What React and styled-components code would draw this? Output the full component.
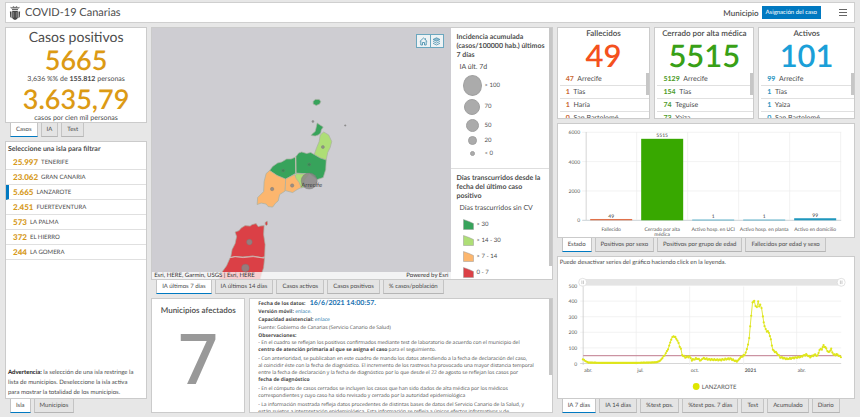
import React from 'react'
import styled, { createGlobalStyle } from 'styled-components'

const GlobalStyle = createGlobalStyle`
  * {
    box-sizing: border-box;
    margin: 0;
    padding: 0;
  }
  body {
    background: #e7e7e7;
    color: #4c4c4c;
    font-family: Lato, "Liberation Sans", sans-serif;
    font-size: 7px;
    text-rendering: geometricPrecision;
  }
  button {
    font-family: inherit;
    color: inherit;
    text-rendering: inherit;
  }
  svg text {
    font-family: Lato, "Liberation Sans", sans-serif;
  }
`
const Page = styled.div`
  display: flex;
  flex-direction: column;
  gap: 4px;
  height: 100vh;
  padding: 2px 5px 4px;
`
const Header = styled.header`
  display: flex;
  align-items: center;
  flex: none;
  height: 21px;
  padding: 0 6px 0 3px;
  background: #fff;
  border: 1px solid #cfcfcf;
  svg {
    display: block;
  }
  h1 {
    flex: 1;
    margin-left: 4px;
    font-size: 11px;
    font-weight: 400;
  }
`
const HeaderLabel = styled.span`
  margin-right: 3px;
  font-size: 8px;
  font-weight: 600;
`
const CaseButton = styled.button`
  height: 13px;
  padding: 0 4px;
  border: none;
  background: #0079c1;
  color: #fff;
  font-size: 6px;
`
const MenuButton = styled.button`
  margin-left: 17px;
  border: none;
  background: none;
`
const Columns = styled.main`
  display: grid;
  grid-template-columns: 142fr 401fr 298fr;
  column-gap: 4px;
  flex: 1;
  min-height: 0;
`
const Column = styled.div`
  display: flex;
  flex-direction: column;
  gap: 4px;
  min-width: 0;
  min-height: 0;
`
const Group = styled.div`
  display: flex;
  flex-direction: column;
  flex: ${(p) => p.$grow} 1 0;
  min-height: 0;
`
const Row = styled.div`
  display: flex;
  gap: 4px;
  flex: ${(p) => p.$grow} 1 0;
  min-height: 0;
`
const Card = styled.section`
  position: relative;
  display: flex;
  flex-direction: column;
  flex: ${(p) => p.$grow || 1} 1 0;
  min-width: 0;
  min-height: 0;
  overflow: hidden;
  background: #fff;
  border: 1px solid #cbcbcb;
`
const TabBar = styled.nav`
  display: flex;
  gap: 3px;
  flex: none;
  height: 14px;
  padding-left: 5px;
`
const Tab = styled.button`
  height: 14px;
  padding: 0 5px;
  border: 1px solid #c4c4c4;
  border-top: none;
  border-bottom: ${(p) => (p.$active ? '1px solid #0079c1' : '1px solid #b5b5b5')};
  background: ${(p) => (p.$active ? '#fff' : '#e4e4e4')};
  font-size: 6px;
  white-space: nowrap;
`
const Indicator = styled(Card)`
  align-items: center;
  h2 {
    margin-top: 1px;
    font-size: 14px;
    line-height: 16px;
    font-weight: 400;
  }
  p {
    font-size: 7px;
    line-height: 9px;
  }
`
const BigNumber = styled.strong`
  font-size: ${(p) => p.$size}px;
  line-height: 30px;
  font-weight: 600;
  color: ${(p) => p.$color};
`
const ListTitle = styled.h3`
  padding: 2px 2px 0;
  font-size: 7px;
  line-height: 11px;
`
const IslandList = styled.ul`
  flex: 1;
  list-style: none;
`
const Island = styled.li`
  button {
    display: flex;
    align-items: center;
    gap: 3px;
    width: 100%;
    height: 15px;
    padding-left: ${(p) => (p.$active ? '4px' : '7px')};
    border: none;
    border-left: ${(p) => (p.$active ? '3px solid #0079c1' : 'none')};
    border-bottom: 1px solid #e0e0e0;
    background: none;
    font-size: 6px;
  }
  strong {
    font-size: 8px;
    font-weight: 900;
    color: #d69a1c;
  }
`
const Warning = styled.p`
  padding: 0 6px 0 2px;
  font-size: 6px;
  line-height: 10px;
  b {
    color: #222;
  }
`
const MapCard = styled(Card)`
  flex-direction: row;
`
const MapArea = styled.div`
  position: relative;
  flex: 298 1 0;
  min-width: 0;
  background: #cecdd2;
  > svg {
    display: block;
    width: 100%;
    height: 100%;
  }
`
const MapTools = styled.div`
  position: absolute;
  top: 6px;
  right: 7px;
  display: flex;
  border: 1px solid #6ba7bf;
  button {
    display: flex;
    align-items: center;
    justify-content: center;
    width: 13px;
    height: 12px;
    border: none;
    background: #eef3f5;
  }
  button + button {
    border-left: 1px solid #6ba7bf;
  }
`
const Attribution = styled.div`
  position: absolute;
  left: 0;
  right: 0;
  bottom: 0;
  display: flex;
  justify-content: space-between;
  padding: 0 2px;
  background: rgba(255, 255, 255, 0.75);
  font-size: 6px;
  line-height: 7px;
  color: #333;
`
const Legend = styled.aside`
  flex: 101 1 0;
  min-width: 0;
  overflow: hidden;
  section {
    padding: 5px 6px 0;
  }
  section + section {
    margin-top: 9px;
    border-top: 1px solid #dedede;
  }
  h3 {
    font-size: 7px;
    line-height: 9px;
  }
  p {
    margin: 3px;
    font-size: 7px;
    line-height: 9px;
    white-space: nowrap;
  }
`
const LegendItem = styled.div`
  display: flex;
  align-items: center;
  gap: 3px;
  height: ${(p) => p.$height}px;
  padding-left: 6px;
  font-size: 6px;
`
const Bubble = styled.span`
  display: flex;
  justify-content: center;
  width: 19px;
  &::before {
    content: '';
    width: ${(p) => p.$size}px;
    height: ${(p) => p.$size}px;
    border-radius: 50%;
    background: #ababab;
    border: 1px solid #a0a0a0;
  }
`
const ScrollThumb = styled.span`
  position: absolute;
  top: ${(p) => p.$top || '0'};
  right: 0;
  width: 3px;
  height: ${(p) => p.$height};
  background: #c6c6c6;
`
const Affected = styled(Card)`
  align-items: center;
  h2 {
    margin-top: 6px;
    font-size: 8px;
    line-height: 10px;
    font-weight: 600;
  }
  strong {
    font-family: "Open Sans", "Noto Sans", sans-serif;
    font-size: 70px;
    font-weight: 600;
    line-height: 84px;
    color: #999;
  }
`
const Notes = styled.div`
  padding: 1px 8px 0;
  font-family: "Open Sans", "Noto Sans", sans-serif;
  font-size: 5px;
  line-height: 8px;
  white-space: nowrap;
  p {
    margin-bottom: 2px;
    line-height: 7px;
  }
  a {
    color: #1673a8;
    text-decoration: none;
  }
  time {
    margin-left: 3px;
    font-family: Lato, "Liberation Sans", sans-serif;
    font-size: 7px;
    font-weight: 700;
    line-height: 7px;
    color: #1670b0;
  }
`
const Status = styled(Card)`
  h2 {
    font-size: 8px;
    line-height: 10px;
    font-weight: 600;
    text-align: center;
    white-space: nowrap;
  }
  ${BigNumber} {
    line-height: 35px;
    text-align: center;
  }
  ul {
    list-style: none;
    margin-left: 2px;
  }
  li {
    height: 13px;
    padding-left: 6px;
    border-bottom: 1px solid #e0e0e0;
    font-size: 7px;
    line-height: 12px;
  }
  li b {
    margin-right: 2px;
    color: ${(p) => p.$color};
  }
`
const ChartBox = styled.div`
  flex: 1;
  min-height: 0;
  svg {
    display: block;
    width: 100%;
    height: 100%;
  }
`
const ChartNote = styled.p`
  padding: 1px 2px 0;
  font-size: 6px;
  line-height: 10px;
`

const islands = [
  ['25.997', 'TENERIFE'],
  ['23.062', 'GRAN CANARIA'],
  ['5.665', 'LANZAROTE'],
  ['2.451', 'FUERTEVENTURA'],
  ['573', 'LA PALMA'],
  ['372', 'EL HIERRO'],
  ['244', 'LA GOMERA'],
]

const statuses = [
  {
    title: 'Fallecidos',
    total: 49,
    color: '#f4511e',
    rowColor: '#c9662f',
    grow: 93,
    rows: [[47, 'Arrecife'], [1, 'Tías'], [1, 'Haría'], [0, 'San Bartolomé']],
  },
  {
    title: 'Cerrado por alta médica',
    total: 5515,
    color: '#38a016',
    rowColor: '#4a9a25',
    grow: 99,
    rows: [[5129, 'Arrecife'], [154, 'Tías'], [74, 'Teguise'], [73, 'Yaiza']],
  },
  {
    title: 'Activos',
    total: 101,
    color: '#1b9fd8',
    rowColor: '#2a95bf',
    grow: 96,
    rows: [[99, 'Arrecife'], [1, 'Tías'], [1, 'Yaiza'], [0, 'San Bartolomé']],
  },
]

const bars = [
  { label: ['Fallecido'], value: 49, color: '#e0714a' },
  { label: ['Cerrado por alta', 'médica'], value: 5515, color: '#38a800' },
  { label: ['Activo hosp. en UCI'], value: 1, color: '#1f97bd' },
  { label: ['Activo hosp. en planta'], value: 1, color: '#1f97bd' },
  { label: ['Activo en domicilio'], value: 99, color: '#1f97bd' },
]

// x: position along the axis (0-775), y: incidence
const series = [
  [0, 26], [7, 16], [17, 6], [52, 4], [152, 4], [202, 6], [222, 8], [232, 18],
  [242, 44], [252, 76], [259, 112], [265, 156], [272, 176], [280, 162],
  [287, 130], [294, 92], [298, 54], [307, 40], [320, 44], [327, 22], [342, 32],
  [354, 20], [360, 34], [377, 26], [412, 23], [442, 31], [462, 12], [474, 40],
  [485, 55], [492, 88], [499, 162], [502, 236], [505, 310], [509, 388],
  [514, 404], [518, 364], [522, 364], [526, 400], [529, 362], [532, 382],
  [536, 354], [540, 300], [545, 236], [552, 206], [558, 200], [564, 152],
  [570, 86], [582, 66], [592, 40], [612, 29], [652, 42], [670, 57], [682, 42],
  [697, 57], [704, 48], [710, 88], [717, 92], [722, 116], [730, 96], [737, 70],
  [745, 92], [752, 56], [764, 57], [774, 40],
]

function Tabs({ items }) {
  return (
    <TabBar>
      {items.map((item, i) => (
        <Tab key={item} $active={i === 0}>{item}</Tab>
      ))}
    </TabBar>
  )
}

function Crest() {
  return (
    <svg width="12" height="16" viewBox="0 0 12 16" fill="#444">
      <path d="M2 3.6 1.2 1.8l2 .7L4.3.9 6 2.2 7.7.9l1.1 1.6 2-.7L10 3.6z" opacity=".75" />
      <path d="M3 4.2h6v1H3z" />
      <path d="M3.2 6h5.6v6.2c0 1.4-1.2 2.2-2.8 2.8-1.6-.6-2.8-1.4-2.8-2.8z" />
      <path d="M.9 6.4h1.6v6.8L1.2 12zM11.1 6.4H9.5v6.8l1.3-1.2z" />
      <path d="M4.7 7v5.6M7.3 7v5.6" stroke="#aaa" strokeWidth=".6" />
    </svg>
  )
}

function IslandMap() {
  const green = '#37a35b'
  const lime = '#aede76'
  const orange = '#fcb66e'
  const red = '#db4046'
  return (
    <svg viewBox="152 28 298 252" preserveAspectRatio="xMidYMid slice">
      <g stroke="#a9b0a2" strokeWidth=".7" strokeLinejoin="round">
        <path fill={green} d="M313 102l2-2 4 0 1.5 2-1 2.5-3.5 1.5-3-1.5z" />
        <path fill={green} d="M317 123.5l2 1.5 4 2.5-2 3-.5 3-2.5 2-3 1-4-.5 1-1.5 3-2.5 1-4z" />
        <path fill={lime} d="M320 135.5l3.5-3 5 3 3 6.5-1.5 6-2.5 5-1.5 7.5-6-2-6-3.5 2.5-7 2.5-6z" />
        <path fill={green} d="M295.5 157.5l3-4 3-1 5 1.5 4-1 3.5 2 6 3.5 6 2-.5 9.5-2.5 8-6 2-8-6-7 0-6.5-.5z" />
        <path fill={green} d="M269.5 171l3-4 5-3.5 4-1 5-3 4.5 0 4.5-2 .5 16-11 6.5-8.5-4z" />
        <path fill={lime} d="M296 174l6 .5 7 0-5 6 0 7-3 1-3-6-3.5-4z" />
        <path fill={orange} d="M269.5 171l-3.5 3-2 8-.5 10-6 6-.5 7 4-1.5 5 1 2 2.5 4.5 .5 3-4 2.5-2 1.5-6.5 5.5-3.5.5-12-8.5-3.5z" />
        <path fill={orange} d="M285.5 179.5l9-4.5 1.5 4 3 4 2 5-4 2-4.5 3-7.5-2z" />
        <path fill={red} d="M235 232.5l4-1.5 2-2.5 4-2.5 5 .5 2-1.5 4-1 2 3 2-.5 4-.5-.5 9 1.5 10-.5 12-3 1-9-1.5-10 1-8-.5-4 1 1.5-8 3-6 1.5-7z" />
        <path fill={red} d="M230 258l5-1 8 .5 10-1 9 1.5 2.5 0-1 10-2 6-2 8h-42l4-9 5-7z" />
        <path fill={red} d="M265 223l2-1.5.5 3-1 1.5-1.5-1z" />
      </g>
      <path d="M230 258l5-1 8 1 10-1 11 1.5M295.5 157.5v16" fill="none" stroke="#e8c5c5" strokeWidth=".7" />
      <g fill="#8b8787" fillOpacity=".85" stroke="#777" strokeWidth=".4">
        <circle cx="312.7" cy="122" r="1" />
        <circle cx="345" cy="126" r=".7" />
        <circle cx="322.7" cy="147.5" r="1.5" />
        <circle cx="283" cy="171" r="1.5" fill="#2f8b4d" />
        <circle cx="309" cy="165" r="1.5" fill="#2f8b4d" />
        <circle cx="309" cy="181.5" r="8" />
        <circle cx="272" cy="189.5" r="1.7" />
        <circle cx="292" cy="186" r="1.7" />
        <circle cx="249.3" cy="242.5" r="2.8" />
        <circle cx="245.3" cy="268.3" r="3.8" />
      </g>
      <text x="301" y="187" fontSize="6" fill="#444">Arrecife</text>
    </svg>
  )
}

function LegendShape({ color }) {
  return (
    <svg width="11" height="11" viewBox="0 0 11 11">
      <path d="M.5.5 6 2.5 10.5 4.5V10.5H.5z" fill={color} stroke="#999" strokeWidth=".5" />
    </svg>
  )
}

function BarChart() {
  const step = 51
  const y = (v) => 221.3 - (v / 6000) * 88
  return (
    <svg viewBox="558 125 296 113" fontSize="5" fill="#555">
      {[0, 2000, 4000, 6000].map((v) => (
        <g key={v}>
          <path d={`M582 ${y(v)}H841`} stroke={v ? '#ededed' : '#b5bfc4'} strokeWidth=".7" />
          <text x="580" y={y(v) + 2} textAnchor="end">{v}</text>
        </g>
      ))}
      <path d="M586 133V221" stroke="#c4c4c4" strokeWidth=".7" />
      {bars.map((bar, i) => {
        const center = 611 + i * step
        return (
          <g key={bar.label[0]} textAnchor="middle">
            <path d={`M${center + 25.5} 133V221`} stroke="#ededed" strokeWidth=".7" />
            <rect x={center - 21} y={y(bar.value) - 0.6} width="42" height={221.9 - y(bar.value)} fill={bar.color} />
            <text x={center} y={y(bar.value) - 2} fill="#333">{bar.value}</text>
            {bar.label.map((line, n) => (
              <text key={line} x={center} y={232 + n * 5}>{line}</text>
            ))}
          </g>
        )
      })}
    </svg>
  )
}

function LineChart() {
  const y = (v) => 363.5 - v * 0.156
  const x = (v) => 582.7 + v / 3
  // one marker every three units, interpolated between the known points
  const points = []
  for (let i = 0; i < series.length - 1; i++) {
    const [x1, y1] = series[i]
    const [x2, y2] = series[i + 1]
    const count = Math.max(1, Math.round((x2 - x1) / 3))
    for (let n = 0; n < count; n++) {
      const jitter = Math.sin(points.length * 2.3) * (y1 > 20 ? 4 : 0.5)
      points.push([x(x1 + ((x2 - x1) * n) / count), y(y1 + ((y2 - y1) * n) / count + jitter)])
    }
  }
  points.push([x(774), y(40)])
  const ticks = [['abr.', 583], ['jul.', 636], ['oct.', 689.5], ['2021', 743.5], ['abr.', 796.5]]
  return (
    <svg viewBox="558 268 296 130" fontSize="5" fill="#555">
      <rect x="582" y="279" width="259" height="6.5" fill="#e4e4e4" />
      {[582.5, 841].map((cx) => (
        <g key={cx}>
          <circle cx={cx} cy="282.3" r="4" fill="#fff" stroke="#d0d0d0" strokeWidth=".6" />
          <path d={`M${cx - 0.8} 280.5v3.6M${cx + 0.8} 280.5v3.6`} stroke="#999" strokeWidth=".5" />
        </g>
      ))}
      {[0, 100, 200, 300, 400, 500].map((v) => (
        <g key={v}>
          <path d={`M580 ${y(v)}H841`} stroke={v ? '#ededed' : '#c4c4c4'} strokeWidth=".7" />
          <text x="577" y={y(v) + 2} textAnchor="end">{v}</text>
        </g>
      ))}
      {ticks.map(([label, tx], i) => (
        <g key={tx}>
          <path d={`M${tx} 286.5V365`} stroke={i ? '#ededed' : '#c4c4c4'} strokeWidth=".7" />
          <text x={tx + 1} y="372" fontWeight={label === '2021' ? 700 : 400}>{label}</text>
        </g>
      ))}
      <path d={`M583 ${y(50)}H841`} stroke="#bf7b8d" strokeWidth="1" />
      <path d={'M' + points.map((p) => p.join(' ')).join('L')} fill="none" stroke="#e2e83c" strokeWidth="1" />
      {points.map(([px, py], i) => (
        <circle key={i} cx={px} cy={py} r="1.1" fill="#dfe61a" />
      ))}
      <circle cx="696" cy="386.5" r="3.4" fill="#dfe600" />
      <text x="701.5" y="388.8" fontSize="6">LANZAROTE</text>
    </svg>
  )
}

export default function App() {
  return (
    <>
      <GlobalStyle />
      <Page>
        <Header>
          <Crest />
          <h1>COVID-19 Canarias</h1>
          <HeaderLabel>Municipio</HeaderLabel>
          <CaseButton>Asignación del caso</CaseButton>
          <MenuButton aria-label="Menú">
            <svg width="10" height="9" viewBox="0 0 10 9" stroke="#666" strokeWidth="1">
              <path d="M1 1.5h8M1 4.5h8M1 7.5h8" />
            </svg>
          </MenuButton>
        </Header>
        <Columns>
          <Column>
            <Group $grow={110}>
              <Indicator>
                <h2>Casos positivos</h2>
                <BigNumber $size={27} $color="#dc9a14">5665</BigNumber>
                <p>3,636 %% de <b>155.812</b> personas</p>
                <BigNumber $size={27} $color="#dc9a14">3.635,79</BigNumber>
                <p>casos por cien mil personas</p>
              </Indicator>
              <Tabs items={['Casos', 'IA', 'Test']} />
            </Group>
            <Group $grow={272}>
              <Card>
                <ListTitle>Seleccione una isla para filtrar</ListTitle>
                <IslandList>
                  {islands.map(([count, name]) => (
                    <Island key={name} $active={name === 'LANZAROTE'}>
                      <button><strong>{count}</strong> {name}</button>
                    </Island>
                  ))}
                </IslandList>
                <Warning>
                  <b>Advertencia:</b> la selección de una isla restringe la lista de
                  municipios. Deseleccione la isla activa para mostrar la totalidad
                  de los municipios.
                </Warning>
              </Card>
              <Tabs items={['Isla', 'Municipios']} />
            </Group>
          </Column>

          <Column>
            <Group $grow={267}>
              <MapCard>
                <MapArea>
                  <IslandMap />
                  <MapTools>
                    <button aria-label="Inicio">
                      <svg width="9" height="9" viewBox="0 0 9 9" fill="none" stroke="#4d93b0" strokeWidth=".9">
                        <path d="M.8 4.5 4.5 1l3.7 3.5M1.8 4v4h1.7V5.5h2V8h1.7V4M6.5 1.3v1.5" />
                      </svg>
                    </button>
                    <button aria-label="Capas">
                      <svg width="9" height="9" viewBox="0 0 9 9" fill="none" stroke="#4d93b0" strokeWidth=".8">
                        <path d="M4.5.8 8 2.5 4.5 4.2 1 2.5z" fill="#8fbccf" />
                        <path d="M1 4.4 4.5 6.1 8 4.4M1 6.3 4.5 8 8 6.3" />
                      </svg>
                    </button>
                  </MapTools>
                  <Attribution>
                    <span>Esri, HERE, Garmin, USGS | Esri, HERE</span>
                    <span>Powered by Esri</span>
                  </Attribution>
                </MapArea>
                <Legend>
                  <section>
                    <h3>Incidencia acumulada (casos/100000 hab.) últimos 7 días</h3>
                    <p>IA últ. 7d</p>
                    <LegendItem $height={21}><Bubble $size={19} />&gt; 100</LegendItem>
                    <LegendItem $height={21}><Bubble $size={14} />70</LegendItem>
                    <LegendItem $height={17}><Bubble $size={11} />50</LegendItem>
                    <LegendItem $height={13}><Bubble $size={7} />20</LegendItem>
                    <LegendItem $height={12}><Bubble $size={3} />&lt; 0</LegendItem>
                  </section>
                  <section>
                    <h3>Días transcurridos desde la fecha del último caso positivo</h3>
                    <p>Días trascurridos sin CV</p>
                    <LegendItem $height={16}><LegendShape color="#37a35b" />&gt; 30</LegendItem>
                    <LegendItem $height={16}><LegendShape color="#aede76" />&gt; 14 - 30</LegendItem>
                    <LegendItem $height={16}><LegendShape color="#fcb66e" />&gt; 7 - 14</LegendItem>
                    <LegendItem $height={16}><LegendShape color="#db4046" />0 - 7</LegendItem>
                  </section>
                </Legend>
                <ScrollThumb $height="95%" />
              </MapCard>
              <Tabs items={['IA últimos 7 días', 'IA últimos 14 días', 'Casos activos', 'Casos positivos', '% casos/población']} />
            </Group>
            <Row $grow={115}>
              <Affected $grow={93}>
                <h2>Municipios afectados</h2>
                <strong>7</strong>
              </Affected>
              <Card $grow={304}>
                <Notes>
                  <b>Fecha de los datos:</b> <time>16/6/2021 14:00:57.</time><br />
                  <b>Versión móvil:</b> <a href="#movil">enlace.</a><br />
                  <b>Capacidad asistencial:</b> <a href="#capacidad">enlace</a><br />
                  Fuente: Gobierno de Canarias (Servicio Canario de Salud)<br />
                  <b>Observaciones:</b>
                  <p>
                    - En el cuadro se reflejan los positivos confirmados mediante test de laboratorio de acuerdo con el municipio del<br />
                    <b>centro de atención primaria al que se asigna el caso</b> para el seguimiento.
                  </p>
                  <p>
                    - Con anterioridad, se publicaban en este cuadro de mando los datos atendiendo a la fecha de declaración del caso,<br />
                    al coincidir éste con la fecha de diagnóstico. El incremento de los rastreos ha provocado una mayor distancia temporal<br />
                    entre la fecha de declaración y la fecha de diagnóstico por lo que desde el 22 de agosto se reflejan los casos por<br />
                    <b>fecha de diagnóstico</b>
                  </p>
                  <p>
                    - En el cómputo de casos cerrados se incluyen los casos que han sido dados de alta médica por los médicos<br />
                    correspondientes y cuyo caso ha sido revisado y cerrado por la autoridad epidemiológica
                  </p>
                  <p>
                    - La información mostrada refleja datos procedentes de distintas bases de datos del Servicio Canario de la Salud, y<br />
                    están sujetos a interpretación epidemiológica. Esta información se refleja a únicos efectos informativos y de
                  </p>
                </Notes>
                <ScrollThumb $height="67%" />
              </Card>
            </Row>
          </Column>

          <Column>
            <Row $grow={92}>
              {statuses.map((s) => (
                <Status key={s.title} $grow={s.grow} $color={s.rowColor}>
                  <h2>{s.title}</h2>
                  <BigNumber $size={31} $color={s.color}>{s.total}</BigNumber>
                  <ul>
                    {s.rows.map(([n, name]) => (
                      <li key={name}><b>{n}</b> {name}</li>
                    ))}
                  </ul>
                  <ScrollThumb $top="50%" $height="24%" />
                </Status>
              ))}
            </Row>
            <Group $grow={129}>
              <Card>
                <ChartBox><BarChart /></ChartBox>
              </Card>
              <Tabs items={['Estado', 'Positivos por sexo', 'Positivos por grupo de edad', 'Fallecidos por edad y sexo']} />
            </Group>
            <Group $grow={157}>
              <Card>
                <ChartNote>Puede desactivar series del gráfico haciendo click en la leyenda.</ChartNote>
                <ChartBox><LineChart /></ChartBox>
              </Card>
              <Tabs items={['IA 7 días', 'IA 14 días', '%test pos.', '%test pos. 7 días', 'Test', 'Acumulado', 'Diario']} />
            </Group>
          </Column>
        </Columns>
      </Page>
    </>
  )
}
